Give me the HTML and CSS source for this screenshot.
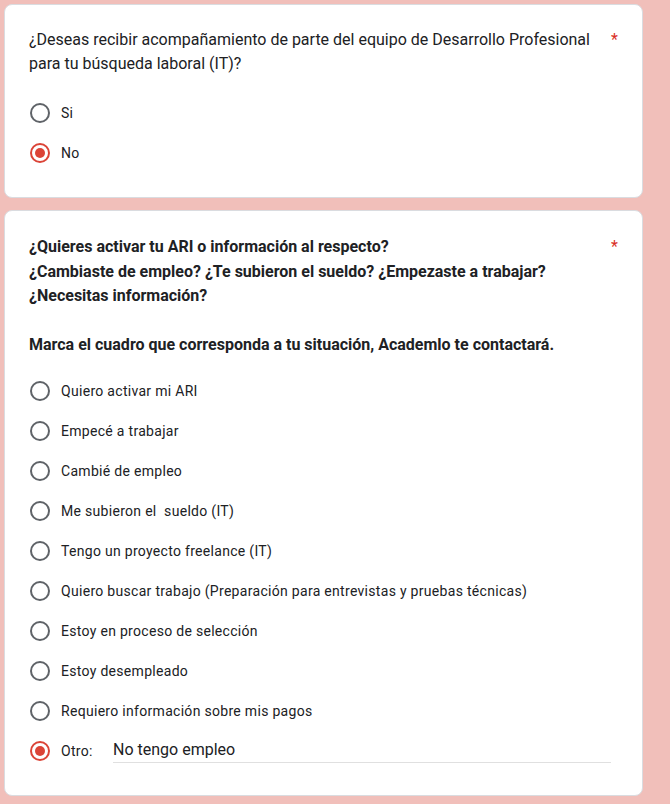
FILE: index.html
```html
<!DOCTYPE html>
<html lang="es">
<head>
<meta charset="utf-8">
<link rel="stylesheet" href="styles.css">
</head>
<body>
<div class="page">
  <section class="card card-1">
    <div class="title">
      <div class="title-text">¿Deseas recibir acompañamiento de parte del equipo de Desarrollo Profesional para tu búsqueda laboral (IT)?</div>
      <span class="req">*</span>
    </div>
    <div class="options">
      <div class="option"><span class="radio"></span><span class="label">Si</span></div>
      <div class="option"><span class="radio checked"></span><span class="label">No</span></div>
    </div>
  </section>
  <section class="card card-2">
    <div class="title">
      <div class="title-text bold">¿Quieres activar tu ARI o información al respecto?<br>¿Cambiaste de empleo? ¿Te subieron el sueldo? ¿Empezaste a trabajar?<br>¿Necesitas información?<br><br>Marca el cuadro que corresponda a tu situación, Academlo te contactará.</div>
      <span class="req">*</span>
    </div>
    <div class="options options-2">
      <div class="option"><span class="radio"></span><span class="label">Quiero activar mi ARI</span></div>
      <div class="option"><span class="radio"></span><span class="label">Empecé a trabajar</span></div>
      <div class="option"><span class="radio"></span><span class="label">Cambié de empleo</span></div>
      <div class="option"><span class="radio"></span><span class="label">Me subieron el&nbsp; sueldo (IT)</span></div>
      <div class="option"><span class="radio"></span><span class="label">Tengo un proyecto freelance (IT)</span></div>
      <div class="option"><span class="radio"></span><span class="label">Quiero buscar trabajo (Preparación para entrevistas y pruebas técnicas)</span></div>
      <div class="option"><span class="radio"></span><span class="label">Estoy en proceso de selección</span></div>
      <div class="option"><span class="radio"></span><span class="label">Estoy desempleado</span></div>
      <div class="option"><span class="radio"></span><span class="label">Requiero información sobre mis pagos</span></div>
      <div class="option other"><span class="radio checked"></span><span class="label other-label">Otro:</span><span class="other-input">No tengo empleo</span></div>
    </div>
  </section>
</div>
</body>
</html>
```

FILE: styles.css
```css
* { box-sizing: border-box; }
html, body { margin: 0; padding: 0; }
body {
  background: #f1bfba;
  font-family: Roboto, "Noto Sans", Arial, sans-serif;
  color: #202124;
  width: 670px;
  height: 804px;
  overflow: hidden;
}
.page {
  padding: 4px 27px 0 4px;
  display: flex;
  flex-direction: column;
  gap: 12px;
}
.card {
  background: #fff;
  border: 1px solid #dadce0;
  border-radius: 8px;
  padding: 23px 24px 24px 24px;
}
.card-2 { padding-top: 24px; padding-bottom: 24px; }
.title {
  display: flex;
  align-items: flex-start;
}
.title-text {
  flex: 1;
  font-size: 16px;
  line-height: 24px;
  letter-spacing: 0;
  padding-right: 4px;
}
.title-text.bold { font-weight: 700; line-height: 24.5px; }
.req {
  color: #d93025;
  font-size: 16px;
  line-height: 24px;
  padding-left: 6px;
}
.options {
  margin-top: 17px;
  display: flex;
  flex-direction: column;
}
.options-2 { margin-top: 13px; }
.option {
  height: 40px;
  display: flex;
  align-items: center;
}
.radio {
  width: 20px;
  height: 20px;
  border: 2px solid #5f6368;
  border-radius: 50%;
  flex: none;
  margin-left: 1px;
  display: flex;
  align-items: center;
  justify-content: center;
}
.radio.checked { border-color: #db4437; }
.radio.checked::after {
  content: "";
  width: 10px;
  height: 10px;
  border-radius: 50%;
  background: #db4437;
}
.label {
  margin-left: 11px;
  font-size: 14px;
  letter-spacing: 0.3px;
  line-height: 20px;
}
.other-label { width: 52px; flex: none; }
.other-input {
  flex: 1;
  font-size: 16px;
  line-height: 24px;
  color: #202124;
  border-bottom: 1px solid #e0e0e0;
  margin-top: 0;
  padding-bottom: 0;
  margin-right: 7px;
}
```
